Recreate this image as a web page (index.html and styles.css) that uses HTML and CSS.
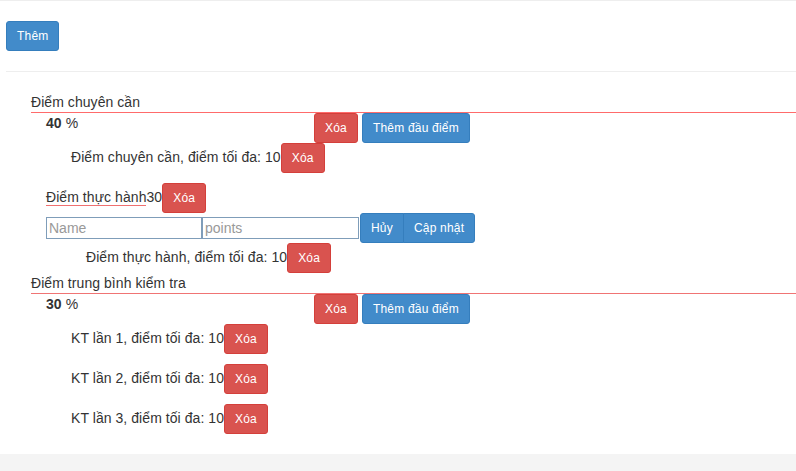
FILE: index.html
```html
<!DOCTYPE html>
<html lang="vi">
<head>
<meta charset="utf-8">
<title>Điểm</title>
<link rel="stylesheet" href="styles.css">
</head>
<body>
<div class="page">
  <div class="toolbar">
    <button class="btn btn-primary">Thêm</button>
  </div>
  <hr class="sep">
  <div class="groups">
    <div class="group">
      <div class="group-title">Điểm chuyên cần</div>
      <div class="group-row">
        <div class="group-weight"><b>40</b> %</div>
        <div class="group-actions">
          <button class="btn btn-danger">Xóa</button>
          <button class="btn btn-primary">Thêm đầu điểm</button>
        </div>
      </div>
      <div class="items">
        <div class="item">Điểm chuyên cần, điểm tối đa: 10<button class="btn btn-danger">Xóa</button></div>
      </div>
    </div>

    <div class="group group-edit">
      <div class="edit-title"><span class="edit-name">Điểm thực hành</span>30<button class="btn btn-danger">Xóa</button></div>
      <div class="edit-form">
        <input class="field field-name" type="text" placeholder="Name"><input class="field field-points" type="text" placeholder="points">
        <div class="btn-group">
          <button class="btn btn-primary">Hủy</button><button class="btn btn-primary">Cập nhật</button>
        </div>
      </div>
      <div class="items items-edit">
        <div class="item item-last">Điểm thực hành, điểm tối đa: 10<button class="btn btn-danger">Xóa</button></div>
      </div>
    </div>

    <div class="group">
      <div class="group-title group-title-alt">Điểm trung bình kiểm tra</div>
      <div class="group-row">
        <div class="group-weight"><b>30</b> %</div>
        <div class="group-actions">
          <button class="btn btn-danger">Xóa</button>
          <button class="btn btn-primary">Thêm đầu điểm</button>
        </div>
      </div>
      <div class="items">
        <div class="item">KT lần 1, điểm tối đa: 10<button class="btn btn-danger">Xóa</button></div>
        <div class="item">KT lần 2, điểm tối đa: 10<button class="btn btn-danger">Xóa</button></div>
        <div class="item">KT lần 3, điểm tối đa: 10<button class="btn btn-danger">Xóa</button></div>
      </div>
    </div>
  </div>
</div>
<div class="footer"></div>
</body>
</html>
```
FILE: styles.css
```css
* { box-sizing: border-box; }
html, body { margin: 0; padding: 0; background: #fff; }
body {
  font-family: "Liberation Sans", Arial, Helvetica, sans-serif;
  font-size: 14px;
  line-height: 20px;
  color: #333;
  letter-spacing: 0.06px;
}
.page {
  border-top: 1px solid #eee;
  padding-bottom: 10px;
}
.toolbar {
  padding: 20px 0 0 6px;
  height: 50px;
}
.sep {
  margin: 20px 0 0 6px;
  border: 0;
  border-top: 1px solid #eee;
  height: 0;
}
.groups { padding-top: 20px; }

.btn {
  display: inline-block;
  font-family: "Liberation Sans", Arial, Helvetica, sans-serif;
  font-size: 12px;
  line-height: 18px;
  letter-spacing: 0.2px;
  padding: 5px 10px;
  border: 1px solid transparent;
  border-radius: 3px;
  color: #fff;
  margin: 0;
  vertical-align: baseline;
  cursor: pointer;
}
.btn-primary { background: #428bca; border-color: #357ebd; }
.btn-danger { background: #d9534f; border-color: #d43f3a; }

.group-title {
  margin-left: 31px;
  border-bottom: 1px solid #ff6b6b;
}
.group-title-alt { border-bottom-color: #f07474; }
.group-row {
  display: flex;
  align-items: flex-start;
  padding-left: 46px;
}
.group-weight { width: 268px; }
.group-weight b { font-weight: bold; }
.group-actions { display: flex; gap: 4px; }

.items { padding-left: 71px; }
.items-edit { padding-left: 86px; }
.item { margin-bottom: 10px; white-space: nowrap; }
.item-last { margin-bottom: 0; }

.edit-title { padding-left: 46px; white-space: nowrap; }
.edit-name { border-bottom: 1px solid #f07070; }

.edit-form {
  display: flex;
  align-items: center;
  padding-left: 46px;
  height: 30px;
}
.field {
  height: 22px;
  margin: 0;
  padding: 0 2px;
  border: 1px solid #7f9db9;
  font-family: "Liberation Sans", Arial, Helvetica, sans-serif;
  font-size: 14px;
  color: #333;
  background: #fff;
  outline: none;
}
.field::placeholder { color: #999; }
.field-name { width: 156px; }
.field-points { width: 157px; }
.btn-group { display: flex; margin-left: 1px; }
.btn-group .btn:first-child { border-radius: 3px 0 0 3px; }
.btn-group .btn:last-child { border-radius: 0 3px 3px 0; margin-left: -1px; }

.footer {
  background: #f4f4f4;
  height: 17px;
}
```
